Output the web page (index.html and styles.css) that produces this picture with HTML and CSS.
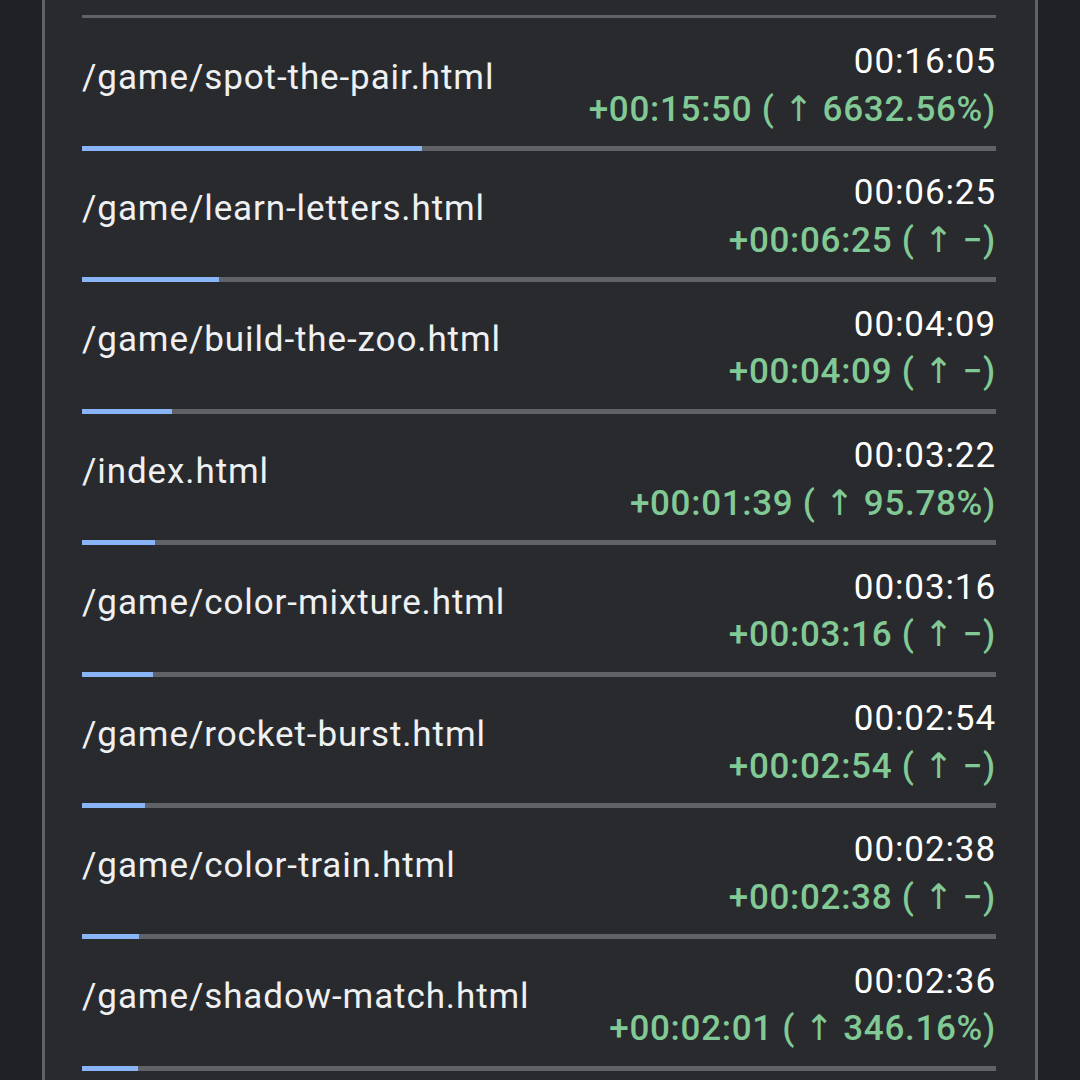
FILE: index.html
```html
<!DOCTYPE html>
<html>
<head>
<meta charset="utf-8">
<link rel="stylesheet" href="styles.css">
</head>
<body>
<div class="card">
  <div class="topline"></div>
  <div class="row">
    <div class="main">
      <div class="name">/game/spot-the-pair.html</div>
      <div class="times"><div class="total">00:16:05</div><div class="delta">+00:15:50 ( <span class="arrow">↑</span> 6632.56%)</div></div>
    </div>
    <div class="track"><div class="fill" style="width:37.2%"></div></div>
  </div>
  <div class="row">
    <div class="main">
      <div class="name">/game/learn-letters.html</div>
      <div class="times"><div class="total">00:06:25</div><div class="delta">+00:06:25 ( <span class="arrow">↑</span> −)</div></div>
    </div>
    <div class="track"><div class="fill" style="width:15.0%"></div></div>
  </div>
  <div class="row">
    <div class="main">
      <div class="name">/game/build-the-zoo.html</div>
      <div class="times"><div class="total">00:04:09</div><div class="delta">+00:04:09 ( <span class="arrow">↑</span> −)</div></div>
    </div>
    <div class="track"><div class="fill" style="width:9.8%"></div></div>
  </div>
  <div class="row">
    <div class="main">
      <div class="name">/index.html</div>
      <div class="times"><div class="total">00:03:22</div><div class="delta">+00:01:39 ( <span class="arrow">↑</span> 95.78%)</div></div>
    </div>
    <div class="track"><div class="fill" style="width:8.0%"></div></div>
  </div>
  <div class="row">
    <div class="main">
      <div class="name">/game/color-mixture.html</div>
      <div class="times"><div class="total">00:03:16</div><div class="delta">+00:03:16 ( <span class="arrow">↑</span> −)</div></div>
    </div>
    <div class="track"><div class="fill" style="width:7.8%"></div></div>
  </div>
  <div class="row">
    <div class="main">
      <div class="name">/game/rocket-burst.html</div>
      <div class="times"><div class="total">00:02:54</div><div class="delta">+00:02:54 ( <span class="arrow">↑</span> −)</div></div>
    </div>
    <div class="track"><div class="fill" style="width:6.9%"></div></div>
  </div>
  <div class="row">
    <div class="main">
      <div class="name">/game/color-train.html</div>
      <div class="times"><div class="total">00:02:38</div><div class="delta">+00:02:38 ( <span class="arrow">↑</span> −)</div></div>
    </div>
    <div class="track"><div class="fill" style="width:6.2%"></div></div>
  </div>
  <div class="row">
    <div class="main">
      <div class="name">/game/shadow-match.html</div>
      <div class="times"><div class="total">00:02:36</div><div class="delta">+00:02:01 ( <span class="arrow">↑</span> 346.16%)</div></div>
    </div>
    <div class="track"><div class="fill" style="width:6.1%"></div></div>
  </div>
</div>
</body>
</html>
```
FILE: styles.css
```css
html, body {
  margin: 0;
  padding: 0;
  background: #202124;
  height: 1080px;
  overflow: hidden;
}
body {
  font-family: Roboto, "Liberation Sans", sans-serif;
  font-size: 35px;
  line-height: 47.6px;
  letter-spacing: 0.9px;
}
.card {
  margin-left: 42px;
  width: 996px;
  box-sizing: border-box;
  height: 1080px;
  background: #292a2d;
  border-left: 3px solid #5f6368;
  border-right: 3px solid #5f6368;
  padding: 15px 39px 0 37px;
}
.topline {
  height: 3px;
  background: #5f6368;
  margin-bottom: 1.6px;
}
.row {
  height: 131.4px;
  display: flex;
  flex-direction: column;
}
.main {
  flex: 1;
  display: flex;
  justify-content: space-between;
  align-items: flex-start;
  padding-top: 18.5px;
}
.name {
  color: #eef0f2;
  margin-top: 15.5px;
}
.times {
  text-align: right;
}
.total {
  color: #ffffff;
}
.delta {
  color: #81c995;
  font-weight: 500;
  letter-spacing: 0.7px;
}
.arrow {
  font-family: "DejaVu Sans", sans-serif;
  font-weight: 400;
  letter-spacing: 0;
}
.track {
  height: 5px;
  background: #5f6368;
}
.fill {
  height: 100%;
  background: #8ab4f8;
}
```
